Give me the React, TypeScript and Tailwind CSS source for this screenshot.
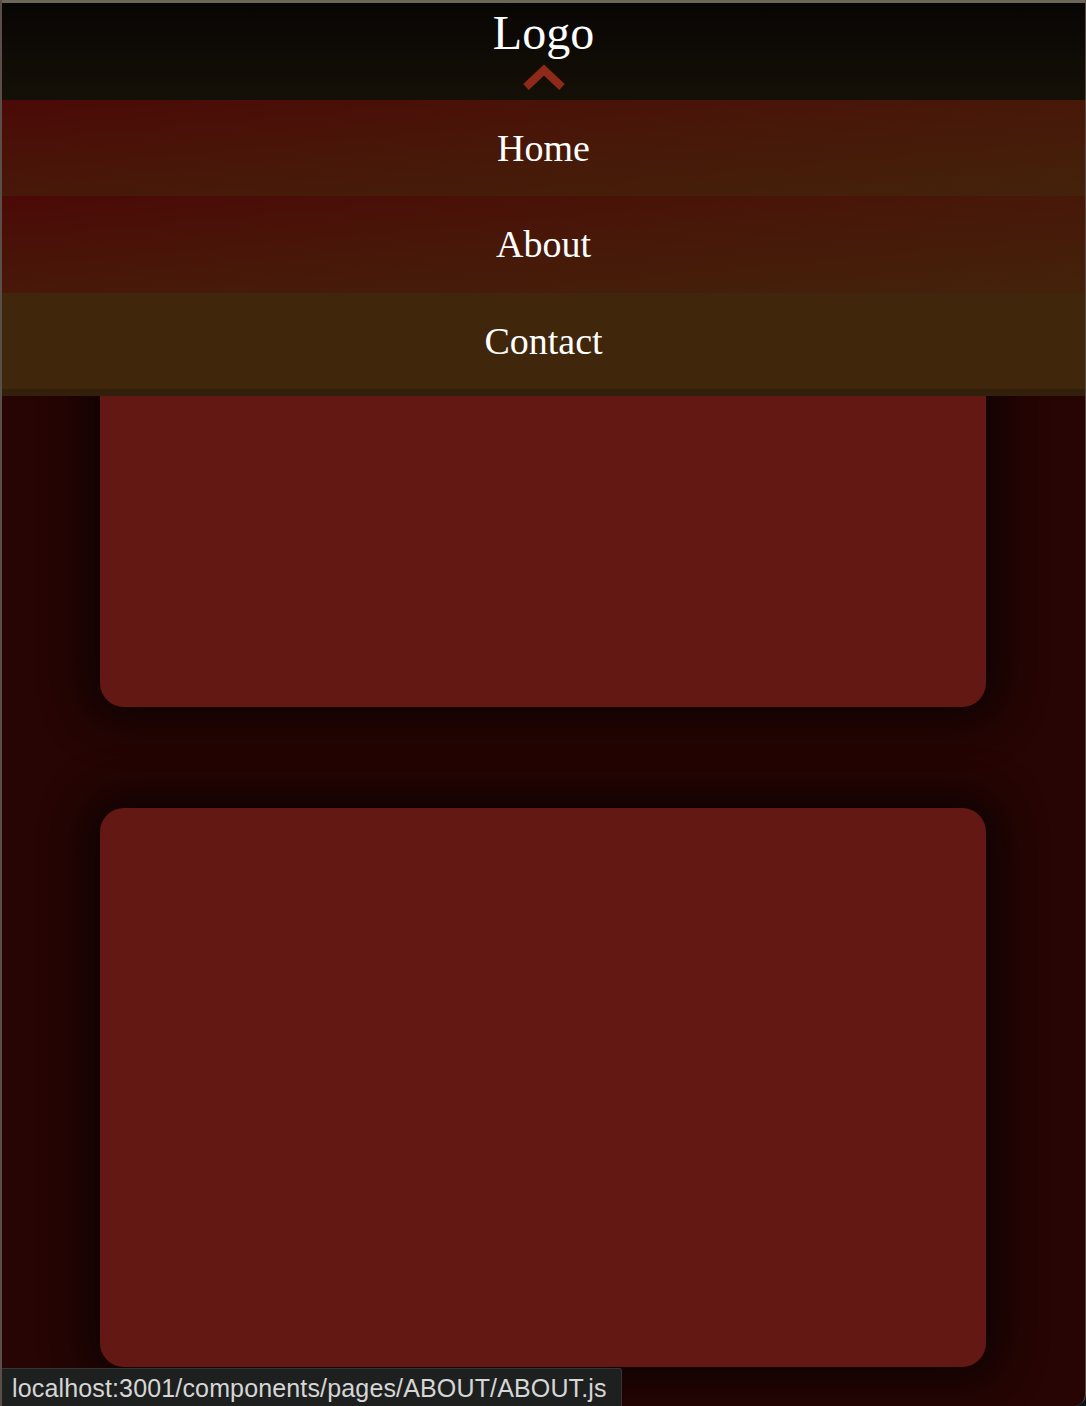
import React from "react";

export default function App() {
  const serif = { fontFamily: '"Liberation Serif", "Times New Roman", serif' };
  return (
    <div className="relative w-[1086px] h-[1406px] overflow-hidden bg-[#0b1216]">
      <div className="relative w-full h-full bg-[#260504] border-l-2 border-r border-[#5a4e48] rounded-br-[12px] overflow-hidden">
        {/* page content */}
        <div className="flex flex-col gap-[101px] pl-[98px] pr-[99px] pt-[148px]">
          <div className="h-[559px] rounded-[24px] bg-[#641813] shadow-[0_0_40px_16px_rgba(10,2,2,0.8)]" />
          <div className="h-[559px] rounded-[24px] bg-[#641813] shadow-[0_0_40px_16px_rgba(10,2,2,0.8)]" />
        </div>

        {/* dropdown header overlay */}
        <div className="absolute top-0 left-0 right-0 flex flex-col" style={serif}>
          <div className="h-[3px] bg-[#6d6555]" />
          <div className="h-[97px] bg-gradient-to-b from-[#080604] to-[#151007] flex flex-col items-center">
            <div className="text-white text-[48px] leading-none mt-[6px]">Logo</div>
            <svg width="44" height="30" viewBox="0 0 44 30" className="mt-[5px]">
              <polyline points="4,25 22,8 40,25" fill="none" stroke="#8d2b18" strokeWidth="8" strokeLinejoin="miter" />
            </svg>
          </div>
          <div className="h-[96px] bg-gradient-to-br from-[#4b0907] to-[#43220a] flex items-center justify-center text-white text-[38px]">Home</div>
          <div className="h-[97px] bg-gradient-to-br from-[#4b0907] to-[#43220a] flex items-center justify-center text-white text-[38px]">About</div>
          <div className="h-[96px] bg-[#40260a] flex items-center justify-center text-white text-[38px]">Contact</div>
          <div className="h-[7px] bg-[#33200c]" />
        </div>

        {/* status bar */}
        <div className="absolute left-0 bottom-0 w-[620px] h-[38px] bg-[#1e2020] border-t border-r border-[#343636] rounded-tr-[3px] flex items-center pl-[10px] pt-[3px] text-[#d6d6d6] text-[25px] tracking-[0.15px]" style={{ fontFamily: '"Liberation Sans", Arial, sans-serif' }}>
          localhost:3001/components/pages/ABOUT/ABOUT.js
        </div>
      </div>
    </div>
  );
}
